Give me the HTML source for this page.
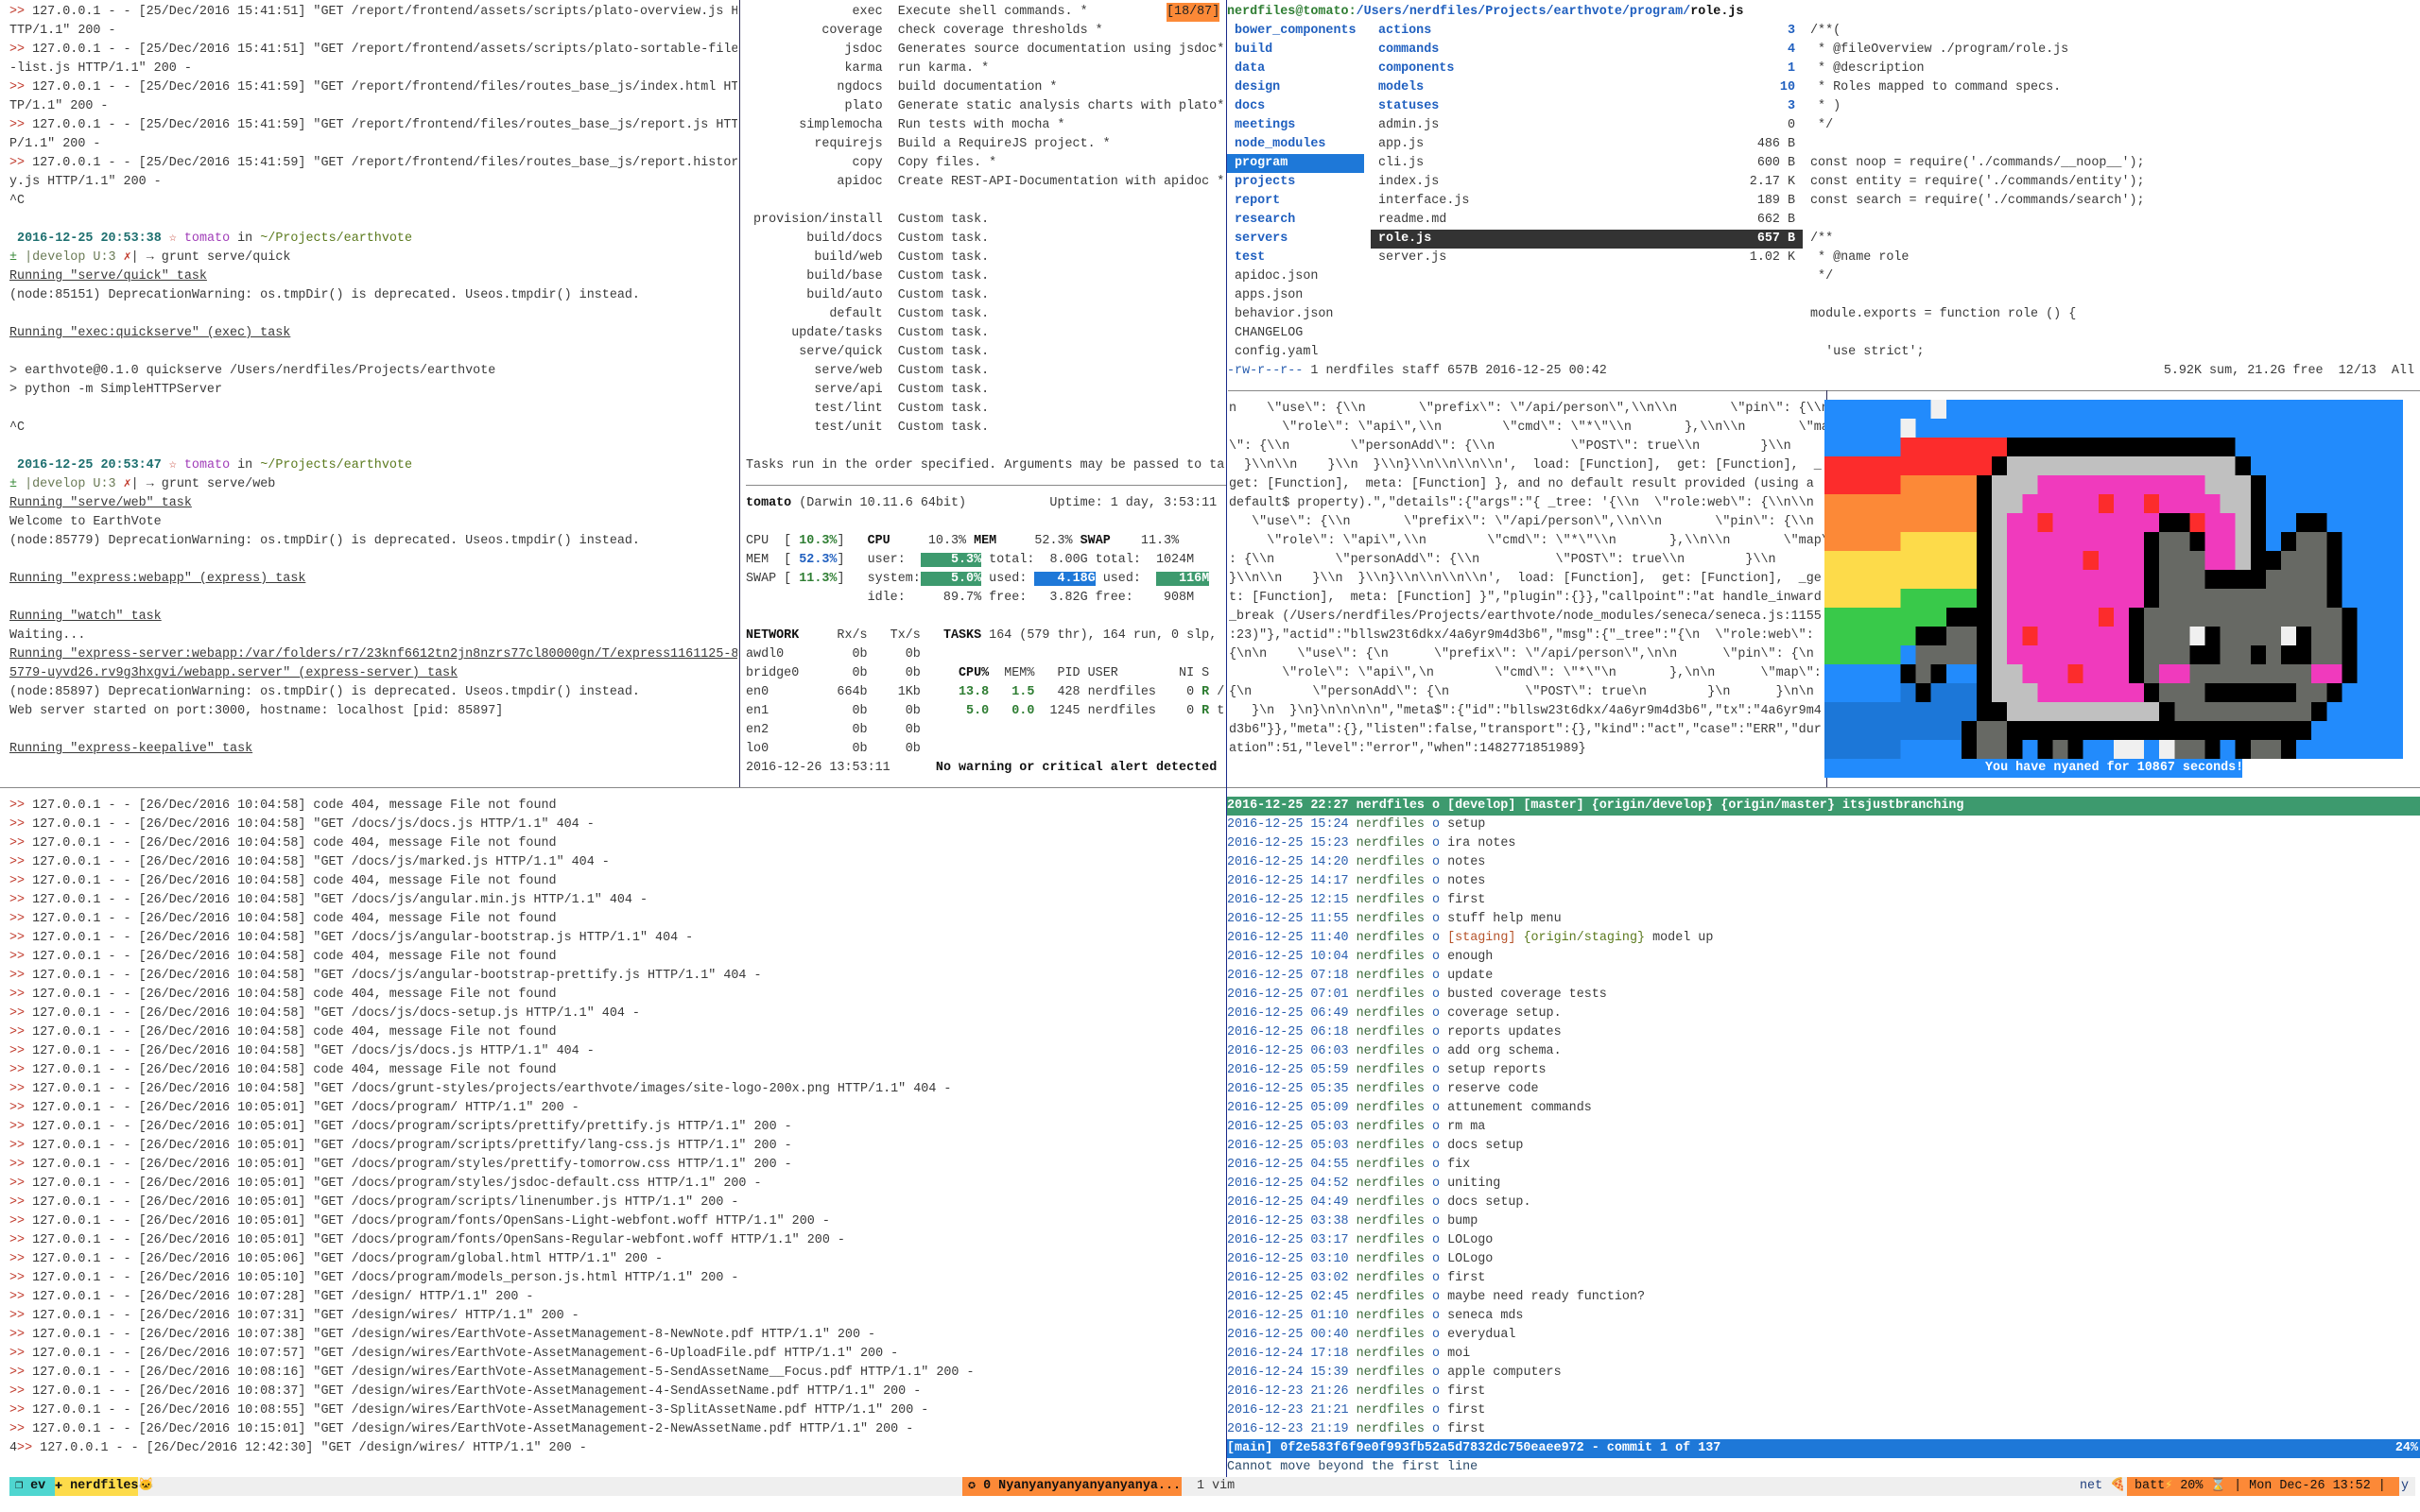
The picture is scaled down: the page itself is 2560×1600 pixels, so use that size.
<!DOCTYPE html>
<html><head><meta charset="utf-8">
<style>
*{margin:0;padding:0;box-sizing:border-box}
html,body{width:2560px;height:1600px;background:#fff;overflow:hidden}
body{position:relative;font-family:"Liberation Mono","DejaVu Sans Mono","Noto Sans CJK JP",monospace;font-size:13.4px;color:#3a3a3a}
.p{position:absolute;white-space:pre;overflow:hidden;line-height:20px}
.p.m{white-space:normal}
.p.m>div{white-space:pre;height:20px}
.rd{color:#c0392b}.b{font-weight:bold}
.u{text-decoration:underline}
.dt{color:#1d6f6f;font-weight:bold}.tm{color:#a03cb8}.pa{color:#5b7a1e}.gr{color:#3a8a3a}.ol{color:#6a7a55}
.hl{position:absolute;height:1px;background:#888}
.vl{position:absolute;width:1px;background:#2a2a55}
.dir{color:#1f5fbf;font-weight:bold}
.gd{color:#2a5fb0}.gn{color:#3a6a3a}.go{color:#2a5fb0}
.hg{color:#2e7d32;font-weight:bold}
.fx{display:flex;justify-content:space-between;padding:0 8px}
</style></head><body>

<div class="hl" style="left:0;top:833px;width:2560px"></div>
<div class="hl" style="left:789px;top:513px;width:508px"></div>
<div class="hl" style="left:1299px;top:413px;width:1261px"></div>
<div class="vl" style="left:782px;top:0;height:833px"></div>
<div class="vl" style="left:1297px;top:0;height:1563px;background:#1a2a8a"></div>
<div class="vl" style="left:1932px;top:413px;height:420px"></div>

<div class="p m" style="left:10px;top:3px;width:770px;height:820px">
<div><span class="rd">&gt;&gt;</span> 127.0.0.1 - - [25/Dec/2016 15:41:51] "GET /report/frontend/assets/scripts/plato-overview.js H</div>
<div>TTP/1.1" 200 -</div>
<div><span class="rd">&gt;&gt;</span> 127.0.0.1 - - [25/Dec/2016 15:41:51] "GET /report/frontend/assets/scripts/plato-sortable-file</div>
<div>-list.js HTTP/1.1" 200 -</div>
<div><span class="rd">&gt;&gt;</span> 127.0.0.1 - - [25/Dec/2016 15:41:59] "GET /report/frontend/files/routes_base_js/index.html HT</div>
<div>TP/1.1" 200 -</div>
<div><span class="rd">&gt;&gt;</span> 127.0.0.1 - - [25/Dec/2016 15:41:59] "GET /report/frontend/files/routes_base_js/report.js HTT</div>
<div>P/1.1" 200 -</div>
<div><span class="rd">&gt;&gt;</span> 127.0.0.1 - - [25/Dec/2016 15:41:59] "GET /report/frontend/files/routes_base_js/report.histor</div>
<div>y.js HTTP/1.1" 200 -</div>
<div>^C</div>
<div></div>
<div> <span class="dt">2016-12-25 20:53:38</span> <span class="rd">☆</span> <span class="tm">tomato</span> in <span class="pa">~/Projects/earthvote</span></div>
<div><span class="gr">±</span> <span class="ol">|develop U:3</span> <span class="rd">✗</span>| → grunt serve/quick</div>
<div><span class="u">Running "serve/quick" task</span></div>
<div>(node:85151) DeprecationWarning: os.tmpDir() is deprecated. Useos.tmpdir() instead.</div>
<div></div>
<div><span class="u">Running "exec:quickserve" (exec) task</span></div>
<div></div>
<div>&gt; earthvote@0.1.0 quickserve /Users/nerdfiles/Projects/earthvote</div>
<div>&gt; python -m SimpleHTTPServer</div>
<div></div>
<div>^C</div>
<div></div>
<div> <span class="dt">2016-12-25 20:53:47</span> <span class="rd">☆</span> <span class="tm">tomato</span> in <span class="pa">~/Projects/earthvote</span></div>
<div><span class="gr">±</span> <span class="ol">|develop U:3</span> <span class="rd">✗</span>| → grunt serve/web</div>
<div><span class="u">Running "serve/web" task</span></div>
<div>Welcome to EarthVote</div>
<div>(node:85779) DeprecationWarning: os.tmpDir() is deprecated. Useos.tmpdir() instead.</div>
<div></div>
<div><span class="u">Running "express:webapp" (express) task</span></div>
<div></div>
<div><span class="u">Running "watch" task</span></div>
<div>Waiting...</div>
<div><span class="u">Running "express-server:webapp:/var/folders/r7/23knf6612tn2jn8nzrs77cl80000gn/T/express1161125-8</span></div>
<div><span class="u">5779-uyvd26.rv9g3hxgvi/webapp.server" (express-server) task</span></div>
<div>(node:85897) DeprecationWarning: os.tmpDir() is deprecated. Useos.tmpdir() instead.</div>
<div>Web server started on port:3000, hostname: localhost [pid: 85897]</div>
<div></div>
<div><span class="u">Running "express-keepalive" task</span></div>
</div>

<div class="p m" style="left:789px;top:3px;width:506px;height:500px">
<div>              exec  Execute shell commands. *</div>
<div>          coverage  check coverage thresholds *</div>
<div>             jsdoc  Generates source documentation using jsdoc*</div>
<div>             karma  run karma. *</div>
<div>            ngdocs  build documentation *</div>
<div>             plato  Generate static analysis charts with plato*</div>
<div>       simplemocha  Run tests with mocha *</div>
<div>         requirejs  Build a RequireJS project. *</div>
<div>              copy  Copy files. *</div>
<div>            apidoc  Create REST-API-Documentation with apidoc *</div>
<div></div>
<div> provision/install  Custom task.</div>
<div>        build/docs  Custom task.</div>
<div>         build/web  Custom task.</div>
<div>        build/base  Custom task.</div>
<div>        build/auto  Custom task.</div>
<div>           default  Custom task.</div>
<div>      update/tasks  Custom task.</div>
<div>       serve/quick  Custom task.</div>
<div>         serve/web  Custom task.</div>
<div>         serve/api  Custom task.</div>
<div>         test/lint  Custom task.</div>
<div>         test/unit  Custom task.</div>
<div></div>
<div>Tasks run in the order specified. Arguments may be passed to ta</div>
</div>
<div class="p" style="left:1234px;top:3px;width:56px;height:20px;background:#fc8937;color:#222">[18/87]</div>

<div class="p m" style="left:789px;top:523px;width:506px;height:300px">
<div><span class="b" style="color:#111">tomato</span> (Darwin 10.11.6 64bit)           Uptime: 1 day, 3:53:11</div>
<div></div>
<div>CPU  [ <span class="hg">10.3%</span>]   <span class="b" style="color:#111">CPU</span>     10.3% <span class="b" style="color:#111">MEM</span>     52.3% <span class="b" style="color:#111">SWAP</span>    11.3%</div>
<div>MEM  [ <span class="b" style="color:#1f5fbf">52.3%</span>]   user:  <span style="background:#3d9a6e;color:#fff;font-weight:bold">    5.3%</span> total:  8.00G total:  1024M</div>
<div>SWAP [ <span class="hg">11.3%</span>]   system:<span style="background:#3d9a6e;color:#fff;font-weight:bold">    5.0%</span> used: <span style="background:#1e78d8;color:#fff;font-weight:bold">   4.18G</span> used:  <span style="background:#3d9a6e;color:#fff;font-weight:bold">   116M</span></div>
<div>                idle:     89.7% free:   3.82G free:    908M</div>
<div></div>
<div><span class="b" style="color:#111">NETWORK</span>     Rx/s   Tx/s   <span class="b" style="color:#111">TASKS</span> 164 (579 thr), 164 run, 0 slp,</div>
<div>awdl0         0b     0b</div>
<div>bridge0       0b     0b     <span class="b" style="color:#111">CPU%</span>  MEM%   PID USER        NI S</div>
<div>en0         664b    1Kb     <span class="hg">13.8</span>   <span class="hg">1.5</span>   428 nerdfiles    0 <span class="hg">R</span> /</div>
<div>en1           0b     0b      <span class="hg">5.0</span>   <span class="hg">0.0</span>  1245 nerdfiles    0 <span class="hg">R</span> t</div>
<div>en2           0b     0b</div>
<div>lo0           0b     0b</div>
<div>2016-12-26 13:53:11      <span class="b" style="color:#111">No warning or critical alert detected</span></div>
</div>

<div class="p" style="left:1298px;top:3px;width:1000px;height:20px"><span class="b" style="color:#2e7d32">nerdfiles@tomato:</span><span class="b" style="color:#1f5fbf">/Users/nerdfiles/Projects/earthvote/program/</span><span class="b" style="color:#111">role.js</span></div>
<div class="p m" style="left:1298px;top:23px;width:145px;height:360px">
<div style="padding-left:8px" class="dir">bower_components</div>
<div style="padding-left:8px" class="dir">build</div>
<div style="padding-left:8px" class="dir">data</div>
<div style="padding-left:8px" class="dir">design</div>
<div style="padding-left:8px" class="dir">docs</div>
<div style="padding-left:8px" class="dir">meetings</div>
<div style="padding-left:8px" class="dir">node_modules</div>
<div style="padding-left:8px;background:#1e78d8;color:#fff;font-weight:bold">program</div>
<div style="padding-left:8px" class="dir">projects</div>
<div style="padding-left:8px" class="dir">report</div>
<div style="padding-left:8px" class="dir">research</div>
<div style="padding-left:8px" class="dir">servers</div>
<div style="padding-left:8px" class="dir">test</div>
<div style="padding-left:8px">apidoc.json</div>
<div style="padding-left:8px">apps.json</div>
<div style="padding-left:8px">behavior.json</div>
<div style="padding-left:8px">CHANGELOG</div>
<div style="padding-left:8px">config.yaml</div>
</div>
<div class="p m" style="left:1450px;top:23px;width:457px;height:260px">
<div class="fx dir"><span>actions</span><span>3</span></div>
<div class="fx dir"><span>commands</span><span>4</span></div>
<div class="fx dir"><span>components</span><span>1</span></div>
<div class="fx dir"><span>models</span><span>10</span></div>
<div class="fx dir"><span>statuses</span><span>3</span></div>
<div class="fx"><span>admin.js</span><span>0</span></div>
<div class="fx"><span>app.js</span><span>486 B</span></div>
<div class="fx"><span>cli.js</span><span>600 B</span></div>
<div class="fx"><span>index.js</span><span>2.17 K</span></div>
<div class="fx"><span>interface.js</span><span>189 B</span></div>
<div class="fx"><span>readme.md</span><span>662 B</span></div>
<div class="fx" style="background:#333;color:#fff;font-weight:bold"><span>role.js</span><span>657 B</span></div>
<div class="fx"><span>server.js</span><span>1.02 K</span></div>
</div>
<div class="p m" style="left:1915px;top:23px;width:640px;height:360px">
<div>/**(</div>
<div> * @fileOverview ./program/role.js</div>
<div> * @description</div>
<div> * Roles mapped to command specs.</div>
<div> * )</div>
<div> */</div>
<div></div>
<div>const noop = require('./commands/__noop__');</div>
<div>const entity = require('./commands/entity');</div>
<div>const search = require('./commands/search');</div>
<div></div>
<div>/**</div>
<div> * @name role</div>
<div> */</div>
<div></div>
<div>module.exports = function role () {</div>
<div></div>
<div>  'use strict';</div>
</div>
<div class="p" style="left:1298px;top:383px;width:1262px;height:20px;display:flex;justify-content:space-between;padding-right:6px"><span><span style="color:#2a5fb0">-rw-r--r--</span> 1 nerdfiles staff 657B 2016-12-25 00:42</span><span>5.92K sum, 21.2G free  12/13  All</span></div>

<div class="p m" style="left:1300px;top:423px;width:630px;height:400px">
<div>n    \"use\": {\\n       \"prefix\": \"/api/person\",\\n\\n       \"pin\": {\\n</div>
<div>       \"role\": \"api\",\\n        \"cmd\": \"*\"\\n       },\\n\\n       \"map</div>
<div>\": {\\n        \"personAdd\": {\\n          \"POST\": true\\n        }\\n</div>
<div>  }\\n\\n    }\\n  }\\n}\\n\\n\\n\\n',  load: [Function],  get: [Function],  _</div>
<div>get: [Function],  meta: [Function] }, and no default result provided (using a</div>
<div>default$ property).","details":{"args":"{ _tree: '{\\n  \"role:web\": {\\n\\n</div>
<div>   \"use\": {\\n       \"prefix\": \"/api/person\",\\n\\n       \"pin\": {\\n</div>
<div>     \"role\": \"api\",\\n        \"cmd\": \"*\"\\n       },\\n\\n       \"map\"</div>
<div>: {\\n        \"personAdd\": {\\n          \"POST\": true\\n        }\\n</div>
<div>}\\n\\n    }\\n  }\\n}\\n\\n\\n\\n',  load: [Function],  get: [Function],  _ge</div>
<div>t: [Function],  meta: [Function] }","plugin":{}},"callpoint":"at handle_inward</div>
<div>_break (/Users/nerdfiles/Projects/earthvote/node_modules/seneca/seneca.js:1155</div>
<div>:23)"},"actid":"bllsw23t6dkx/4a6yr9m4d3b6","msg":{"_tree":"{\n  \"role:web\":</div>
<div>{\n\n    \"use\": {\n      \"prefix\": \"/api/person\",\n\n      \"pin\": {\n</div>
<div>       \"role\": \"api\",\n        \"cmd\": \"*\"\n       },\n\n      \"map\":</div>
<div>{\n        \"personAdd\": {\n          \"POST\": true\n        }\n      }\n\n</div>
<div>   }\n  }\n}\n\n\n\n","meta$":{"id":"bllsw23t6dkx/4a6yr9m4d3b6","tx":"4a6yr9m4</div>
<div>d3b6"}},"meta":{},"listen":false,"transport":{},"kind":"act","case":"ERR","dur</div>
<div>ation":51,"level":"error","when":1482771851989}</div>
</div>

<svg id="ny" style="position:absolute;left:1930px;top:423px" width="612" height="380" viewBox="0 0 612 380" shape-rendering="crispEdges"><rect width="612" height="380" fill="#228bfc"/></svg>
<div class="p" style="left:1930px;top:803px;width:442px;height:20px;background:#228bfc;color:#fff;font-weight:bold;padding-left:170px">You have nyaned for 10867 seconds!</div>

<div class="p m" style="left:10px;top:843px;width:1285px;height:700px">
<div><span class="rd">&gt;&gt;</span> 127.0.0.1 - - [26/Dec/2016 10:04:58] code 404, message File not found</div>
<div><span class="rd">&gt;&gt;</span> 127.0.0.1 - - [26/Dec/2016 10:04:58] "GET /docs/js/docs.js HTTP/1.1" 404 -</div>
<div><span class="rd">&gt;&gt;</span> 127.0.0.1 - - [26/Dec/2016 10:04:58] code 404, message File not found</div>
<div><span class="rd">&gt;&gt;</span> 127.0.0.1 - - [26/Dec/2016 10:04:58] "GET /docs/js/marked.js HTTP/1.1" 404 -</div>
<div><span class="rd">&gt;&gt;</span> 127.0.0.1 - - [26/Dec/2016 10:04:58] code 404, message File not found</div>
<div><span class="rd">&gt;&gt;</span> 127.0.0.1 - - [26/Dec/2016 10:04:58] "GET /docs/js/angular.min.js HTTP/1.1" 404 -</div>
<div><span class="rd">&gt;&gt;</span> 127.0.0.1 - - [26/Dec/2016 10:04:58] code 404, message File not found</div>
<div><span class="rd">&gt;&gt;</span> 127.0.0.1 - - [26/Dec/2016 10:04:58] "GET /docs/js/angular-bootstrap.js HTTP/1.1" 404 -</div>
<div><span class="rd">&gt;&gt;</span> 127.0.0.1 - - [26/Dec/2016 10:04:58] code 404, message File not found</div>
<div><span class="rd">&gt;&gt;</span> 127.0.0.1 - - [26/Dec/2016 10:04:58] "GET /docs/js/angular-bootstrap-prettify.js HTTP/1.1" 404 -</div>
<div><span class="rd">&gt;&gt;</span> 127.0.0.1 - - [26/Dec/2016 10:04:58] code 404, message File not found</div>
<div><span class="rd">&gt;&gt;</span> 127.0.0.1 - - [26/Dec/2016 10:04:58] "GET /docs/js/docs-setup.js HTTP/1.1" 404 -</div>
<div><span class="rd">&gt;&gt;</span> 127.0.0.1 - - [26/Dec/2016 10:04:58] code 404, message File not found</div>
<div><span class="rd">&gt;&gt;</span> 127.0.0.1 - - [26/Dec/2016 10:04:58] "GET /docs/js/docs.js HTTP/1.1" 404 -</div>
<div><span class="rd">&gt;&gt;</span> 127.0.0.1 - - [26/Dec/2016 10:04:58] code 404, message File not found</div>
<div><span class="rd">&gt;&gt;</span> 127.0.0.1 - - [26/Dec/2016 10:04:58] "GET /docs/grunt-styles/projects/earthvote/images/site-logo-200x.png HTTP/1.1" 404 -</div>
<div><span class="rd">&gt;&gt;</span> 127.0.0.1 - - [26/Dec/2016 10:05:01] "GET /docs/program/ HTTP/1.1" 200 -</div>
<div><span class="rd">&gt;&gt;</span> 127.0.0.1 - - [26/Dec/2016 10:05:01] "GET /docs/program/scripts/prettify/prettify.js HTTP/1.1" 200 -</div>
<div><span class="rd">&gt;&gt;</span> 127.0.0.1 - - [26/Dec/2016 10:05:01] "GET /docs/program/scripts/prettify/lang-css.js HTTP/1.1" 200 -</div>
<div><span class="rd">&gt;&gt;</span> 127.0.0.1 - - [26/Dec/2016 10:05:01] "GET /docs/program/styles/prettify-tomorrow.css HTTP/1.1" 200 -</div>
<div><span class="rd">&gt;&gt;</span> 127.0.0.1 - - [26/Dec/2016 10:05:01] "GET /docs/program/styles/jsdoc-default.css HTTP/1.1" 200 -</div>
<div><span class="rd">&gt;&gt;</span> 127.0.0.1 - - [26/Dec/2016 10:05:01] "GET /docs/program/scripts/linenumber.js HTTP/1.1" 200 -</div>
<div><span class="rd">&gt;&gt;</span> 127.0.0.1 - - [26/Dec/2016 10:05:01] "GET /docs/program/fonts/OpenSans-Light-webfont.woff HTTP/1.1" 200 -</div>
<div><span class="rd">&gt;&gt;</span> 127.0.0.1 - - [26/Dec/2016 10:05:01] "GET /docs/program/fonts/OpenSans-Regular-webfont.woff HTTP/1.1" 200 -</div>
<div><span class="rd">&gt;&gt;</span> 127.0.0.1 - - [26/Dec/2016 10:05:06] "GET /docs/program/global.html HTTP/1.1" 200 -</div>
<div><span class="rd">&gt;&gt;</span> 127.0.0.1 - - [26/Dec/2016 10:05:10] "GET /docs/program/models_person.js.html HTTP/1.1" 200 -</div>
<div><span class="rd">&gt;&gt;</span> 127.0.0.1 - - [26/Dec/2016 10:07:28] "GET /design/ HTTP/1.1" 200 -</div>
<div><span class="rd">&gt;&gt;</span> 127.0.0.1 - - [26/Dec/2016 10:07:31] "GET /design/wires/ HTTP/1.1" 200 -</div>
<div><span class="rd">&gt;&gt;</span> 127.0.0.1 - - [26/Dec/2016 10:07:38] "GET /design/wires/EarthVote-AssetManagement-8-NewNote.pdf HTTP/1.1" 200 -</div>
<div><span class="rd">&gt;&gt;</span> 127.0.0.1 - - [26/Dec/2016 10:07:57] "GET /design/wires/EarthVote-AssetManagement-6-UploadFile.pdf HTTP/1.1" 200 -</div>
<div><span class="rd">&gt;&gt;</span> 127.0.0.1 - - [26/Dec/2016 10:08:16] "GET /design/wires/EarthVote-AssetManagement-5-SendAssetName__Focus.pdf HTTP/1.1" 200 -</div>
<div><span class="rd">&gt;&gt;</span> 127.0.0.1 - - [26/Dec/2016 10:08:37] "GET /design/wires/EarthVote-AssetManagement-4-SendAssetName.pdf HTTP/1.1" 200 -</div>
<div><span class="rd">&gt;&gt;</span> 127.0.0.1 - - [26/Dec/2016 10:08:55] "GET /design/wires/EarthVote-AssetManagement-3-SplitAssetName.pdf HTTP/1.1" 200 -</div>
<div><span class="rd">&gt;&gt;</span> 127.0.0.1 - - [26/Dec/2016 10:15:01] "GET /design/wires/EarthVote-AssetManagement-2-NewAssetName.pdf HTTP/1.1" 200 -</div>
<div>4<span class="rd">&gt;&gt;</span> 127.0.0.1 - - [26/Dec/2016 12:42:30] "GET /design/wires/ HTTP/1.1" 200 -</div>
</div>

<div class="p" style="left:1298px;top:843px;width:1262px;height:20px;background:#3d9a6e;color:#fff;font-weight:bold">2016-12-25 22:27 nerdfiles o [develop] [master] {origin/develop} {origin/master} itsjustbranching</div>
<div class="p m" id="git" style="left:1298px;top:863px;width:1262px;height:660px"></div>
<div class="p" style="left:1298px;top:1523px;width:1262px;height:20px;background:#1e78d8;color:#fff;font-weight:bold;display:flex;justify-content:space-between;padding-right:2px"><span>[main] 0f2e583f6f9e0f993fb52a5d7832dc750eaee972 - commit 1 of 137</span><span>24%</span></div>
<div class="p" style="left:1298px;top:1543px;width:600px;height:20px;color:#2a4a6a">Cannot move beyond the first line</div>

<div class="p" style="left:10px;top:1563px;width:2545px;height:20px;background:#efefef"></div>
<div class="p b" style="left:10px;top:1563px;width:48px;height:20px;background:#4fd6d0;color:#111;padding-left:6px">❐ ev</div>
<div class="p b" style="left:58px;top:1563px;width:88px;height:20px;background:#fddb4a;color:#111">✚ nerdfiles</div>
<div class="p" style="left:146px;top:1563px;width:20px;height:20px">🐱</div>
<div class="p b" style="left:1018px;top:1563px;width:232px;height:20px;background:#fc8937;color:#111;padding-left:6px">✪ 0 Nyanyanyanyanyanyanya...</div>
<div class="p" style="left:1266px;top:1563px;width:60px;height:20px">1 vim</div>
<div class="p" style="left:2200px;top:1563px;width:50px;height:20px;color:#1f3f7f">net 🍕</div>
<div class="p" style="left:2250px;top:1563px;width:288px;height:20px;background:#fc8937;color:#111;padding-left:8px">batt<span style="color:#fddb4a">⚡</span> 20% ⌛ | Mon Dec-26 13:52 |</div>
<div class="p" style="left:2540px;top:1563px;width:15px;height:20px;color:#1f3f7f">y</div>

<script>
(function(){
var g=[
["15:24","setup"],["15:23","ira notes"],["14:20","notes"],["14:17","notes"],["12:15","first"],["11:55","stuff help menu"],
["11:40","<span style='color:#b5532a'>[staging]</span> <span style='color:#5b7a1e'>{origin/staging}</span> model up"],
["10:04","enough"],["07:18","update"],["07:01","busted coverage tests"],["06:49","coverage setup."],["06:18","reports updates"],
["06:03","add org schema."],["05:59","setup reports"],["05:35","reserve code"],["05:09","attunement commands"],["05:03","rm ma"],
["05:03","docs setup"],["04:55","fix"],["04:52","uniting"],["04:49","docs setup."],["03:38","bump"],["03:17","LOLogo"],
["03:10","LOLogo"],["03:02","first"],["02:45","maybe need ready function?"],["01:10","seneca mds"],["00:40","everydual"],
["24 17:18","moi"],["24 15:39","apple computers"],["23 21:26","first"],["23 21:21","first"],["23 21:19","first"]];
var h="";
g.forEach(function(e){var d=e[0].length>5?"2016-12-"+e[0]:"2016-12-25 "+e[0];
h+="<div><span class='gd'>"+d+"</span> <span class='gn'>nerdfiles</span> <span class='go'>o</span> "+e[1]+"</div>";});
document.getElementById("git").innerHTML=h;
var C={B:"#228bfc",D:"#1c77d8",R:"#fc2c2c",O:"#fc8937",Y:"#fddb4a",G:"#39c94a",K:"#000",S:"#c0c0c0",P:"#f03abd",g:"#676964",W:"#f0f0f0"};
var rows=["B7W1B30","B5W1B32","B5R7K15B11","R11K1S15K1B10","R5O5K1S3P11S3K1B9","O10K1S2P5R1P2R1P4S2K1B9",
"O10K1S1P2R1P7K2R1P2S1K1B2K2B5","O5Y5K1S1P9K1g2K1P2S1K1B1K1g2K1B4","Y10K1S1P5R1P3K1g3P2S1K2g3K1B4","Y10K1S1P9K1g3K4g4K1B4",
"Y5G5K1S1P9K1g11K1B4","G8K3S1P6R1P1K1g13K1B3","G6K2g2K1S1P1R1P6K1g3W1K1g4W1K1g2K1B3","G5B1g4K1S1P8K1g3K2g2K1g1K2g2K1B3",
"B5K1g1K1B2K1S2P3R1P3K1g1P2g8P2K1B3","B5D1K1D3K1S3P7K1g3K6g2K1B4","D10K2S10K1g9K1B5","D9K1g2K20B6",
"D5B4K1g2K1B1K1g1K1B2W2B1W1g2K1B1K1g2K1B7"];
var s="",cw=16.1;
rows.forEach(function(r,y){var re=/([A-Za-z])(\d+)/g,m,x=0;while(m=re.exec(r)){var n=+m[2];
s+="<rect x='"+(x*cw).toFixed(1)+"' y='"+(y*20)+"' width='"+(n*cw+0.5).toFixed(1)+"' height='20' fill='"+C[m[1]]+"'/>";x+=n;}});
document.getElementById("ny").innerHTML=s;
})();
</script>
</body></html>
